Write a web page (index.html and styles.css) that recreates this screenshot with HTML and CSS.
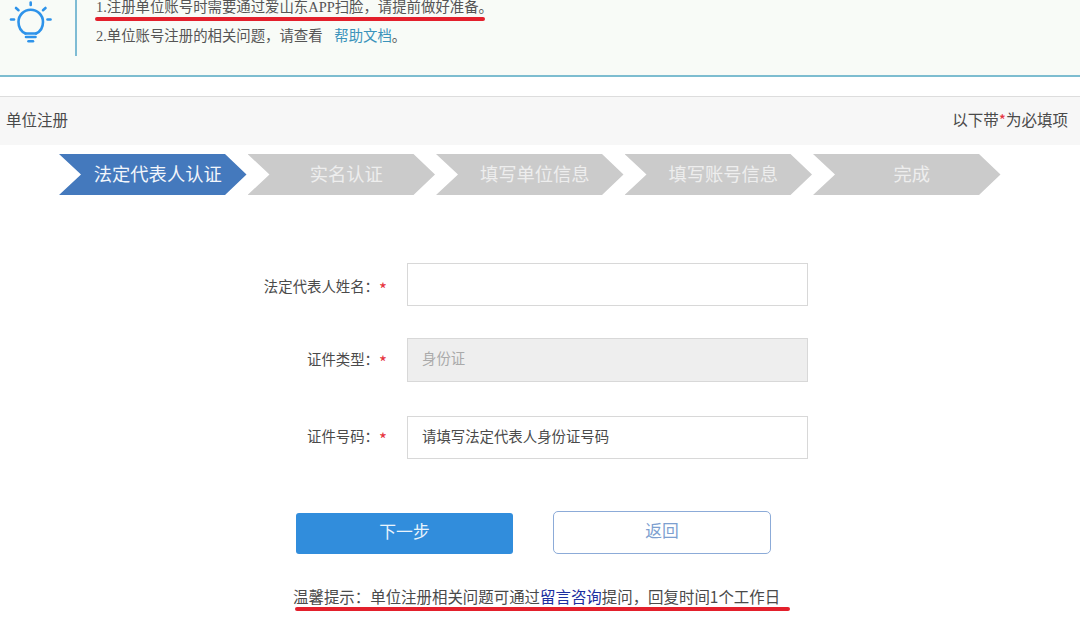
FILE: index.html
```html
<!DOCTYPE html>
<html lang="zh-CN">
<head>
<meta charset="utf-8">
<title>单位注册</title>
<link rel="stylesheet" href="styles.css">
</head>
<body>
<section class="notice">
  <svg class="bulb" width="55" height="46" viewBox="0 0 55 46" fill="none" stroke="#2e93ea" stroke-width="2.600" stroke-linecap="round">
    <path d="M25.500 33.500C21 31.500 18.500 27 18.500 22C18.500 15 24 9.800 30.700 9.800C37.400 9.800 43 15 43 22C43 27 40.500 31.500 36 33.500" />
    <path d="M25.500 33.500H36" />
    <path d="M26 37H35.500" />
    <path d="M28.500 41.200H33" />
    <path d="M30.700 2.500V5" />
    <path d="M11 19.500H14" />
    <path d="M47.500 19.500H50.500" />
    <path d="M16 8L18.500 10.200" />
    <path d="M45.500 8L43 10.200" />
  </svg>
  <div class="divider"></div>
  <div class="notice-text">
    <p class="line1">1.注册单位账号时需要通过爱山东APP扫脸，请提前做好准备。<span class="mark mark-a"></span></p>
    <p class="line2">2.单位账号注册的相关问题，请查看 <a class="help">帮助文档</a>。</p>
  </div>
</section>
<header class="title-bar">
  <span>单位注册</span>
  <span>以下带<b class="star">*</b>为必填项</span>
</header>
<ol class="steps">
  <li class="step active">法定代表人认证</li>
  <li class="step">实名认证</li>
  <li class="step">填写单位信息</li>
  <li class="step">填写账号信息</li>
  <li class="step">完成</li>
</ol>
<form class="form">
  <div class="row row1">
    <label class="label">法定代表人姓名：<b class="star">*</b></label>
    <div class="field"></div>
  </div>
  <div class="row row2">
    <label class="label">证件类型：<b class="star">*</b></label>
    <div class="field disabled">身份证</div>
  </div>
  <div class="row row3">
    <label class="label">证件号码：<b class="star">*</b></label>
    <div class="field">请填写法定代表人身份证号码</div>
  </div>
  <div class="actions">
    <button type="button" class="btn primary">下一步</button>
    <button type="button" class="btn ghost">返回</button>
  </div>
</form>
<p class="tip">温馨提示：单位注册相关问题可通过<a class="consult">留言咨询</a>提问，回复时间1个工作日<span class="mark mark-b"></span></p>
</body>
</html>
```
FILE: styles.css
```css
* { box-sizing: border-box; }
html, body { margin: 0; padding: 0; }
body {
  width: 1080px;
  height: 617px;
  overflow: hidden;
  background: #fff;
  color: #4a4a4a;
  font-family: "Noto Sans CJK SC", "Liberation Sans", sans-serif;
}
p { margin: 0; }
.notice {
  position: relative;
  height: 77px;
  background: #f8fbf7;
  border-bottom: 2px solid #7dbdd0;
  display: flex;
  align-items: flex-start;
}
.bulb { flex: none; }
.divider { width: 2px; height: 56px; margin-left: 20px; background: #7fbcd4; flex: none; }
.notice-text { margin-left: 19px; font-size: 14.400px; color: #555; }
.line1 { position: relative; line-height: 20px; margin-top: -3px; font-family: "Liberation Serif", "Noto Sans CJK SC", serif; }
.line2 { line-height: 20px; margin-top: 9px; font-family: "Liberation Serif", "Noto Sans CJK SC", serif; }
.help { color: #3b93bb; margin-left: 8px; }
.mark { position: absolute; display: block; height: 4px; border-radius: 2px; background: #e3202c; }
.mark-a { left: -1px; width: 390px; top: 20px; }
.title-bar {
  margin-top: 19px;
  height: 49px;
  padding: 0 12px 5px 6px;
  display: flex;
  align-items: center;
  justify-content: space-between;
  background: #f7f7f7;
  border-top: 1px solid #ddd;
  font-size: 15.500px;
}
.star { color: #e6323c; font-weight: 400; }
.steps {
  list-style: none;
  margin: 9px 0 0;
  padding: 0 0 0 59px;
  display: flex;
  gap: 1px;
}
.step {
  width: 187.500px;
  height: 41px;
  line-height: 39px;
  text-align: center;
  font-size: 18.300px;
  color: #eee;
  background: #cbcbcb;
  clip-path: polygon(0 0, 166px 0, 100% 50%, 166px 100%, 0 100%, 22px 50%);
  padding-left: 10px;
}
.step.active { background: #4479bd; color: #f2f6fb; }
.form { margin-top: 68px; }
.row { display: flex; align-items: center; }
.row2 { margin-top: 32px; }
.row3 { margin-top: 34px; }
.row1 .label { padding-top: 2px; }
.row2 .label, .row3 .label { padding-bottom: 4px; }
.label {
  width: 387px;
  text-align: right;
  font-size: 14.400px;
  white-space: nowrap;
}
.label .star { display: inline-block; width: 8px; font-size: 17px; line-height: 10px; vertical-align: -4px; text-align: right; }
.field {
  margin-left: 20px;
  width: 401px;
  height: 43px;
  line-height: 37px;
  padding-left: 14px;
  border: 1px solid #d8d8d8;
  background: #fff;
  font-size: 14.400px;
}
.field.disabled { height: 44px; line-height: 38px; background: #eee; color: #aaa; }
.actions {
  display: flex;
  align-items: flex-end;
  margin-top: 52px;
  padding-left: 296px;
  gap: 40px;
}
.btn {
  font-family: inherit;
  font-size: 16.800px;
  border-radius: 3px;
  padding: 0 0 5px;
  height: 41px;
  width: 217px;
}
.primary { background: #318ddc; border: 0; color: #eaf4fc; }
.ghost { height: 43px; width: 218px; background: #fff; border: 1.500px solid #8cabd8; border-radius: 5px; color: #7d9fd0; }
.tip {
  position: relative;
  width: max-content;
  margin: 31px 0 0 293px;
  line-height: 22px;
  font-size: 15.450px;
}
.consult { color: #1c2ea0; }
.mark-b { left: 2px; width: 495px; top: 22px; }
```
